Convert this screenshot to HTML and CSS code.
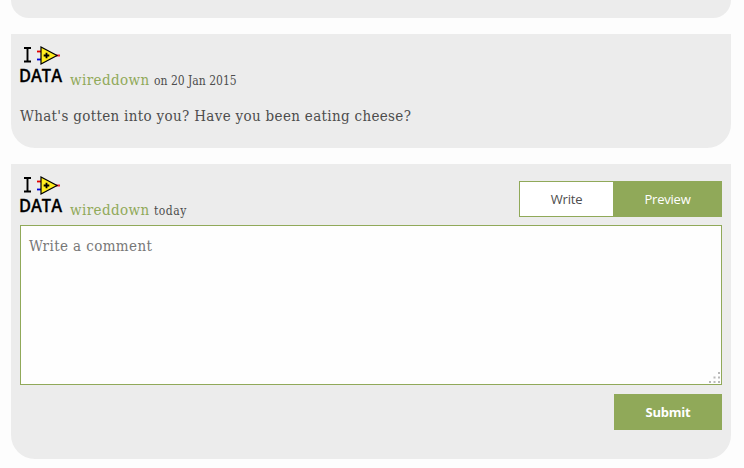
FILE: index.html
```html
<!DOCTYPE html>
<html lang="en">
<head>
<meta charset="utf-8">
<title>Comments</title>
<link rel="stylesheet" href="styles.css">
</head>
<body>
<svg width="0" height="0" class="defs" aria-hidden="true">
  <symbol id="amp" viewBox="0 0 42 41" overflow="visible">
    <path d="M4 4h7M7.500 4v14M4 17.500h7" fill="none" stroke="#000" stroke-width="1.900"/>
    <path d="M17 7.500h4" stroke="#e00000" stroke-width="1.800"/>
    <path d="M17 15.500h4" stroke="#0000d8" stroke-width="1.800"/>
    <path d="M36 11.500h4" stroke="#e8283a" stroke-width="2"/>
    <path d="M21 3v17l16-8.500z" fill="#ffee20" stroke="#000" stroke-width="1.200"/>
    <path d="M23.700 11.500h5.600M26.500 8.700v5.600" stroke="#000" stroke-width="1.800"/>
  </symbol>
</svg>
<main class="comments">
  <article class="card card-previous"></article>
  <article class="card card-comment">
    <header class="meta">
      <svg class="avatar" viewBox="0 0 42 41"><use href="#amp"/><text x="-1" y="38" textLength="43" lengthAdjust="spacingAndGlyphs" class="avatar-text">DATA</text></svg>
      <a class="author">wireddown</a>
      <span class="date">on 20 Jan 2015</span>
    </header>
    <p class="message">What's gotten into you? Have you been eating cheese?</p>
  </article>
  <form class="card card-form">
    <div class="form-head">
      <div class="meta">
        <svg class="avatar" viewBox="0 0 42 41"><use href="#amp"/><text x="-1" y="38" textLength="43" lengthAdjust="spacingAndGlyphs" class="avatar-text">DATA</text></svg>
        <a class="author">wireddown</a>
        <span class="date today">today</span>
      </div>
      <div class="tabs">
        <button type="button" class="tab tab-write">Write</button>
        <button type="button" class="tab tab-preview">Preview</button>
      </div>
    </div>
    <div class="editor">
      <textarea class="input" placeholder="Write a comment"></textarea>
      <svg class="grip" viewBox="0 0 11 11"><path d="M9 0h2v2h-2zM4.500 4.500h2v2h-2zM9 4.500h2v2h-2zM0 9h2v2h-2zM4.500 9h2v2h-2zM9 9h2v2h-2z" fill="#b9b9b9"/></svg>
    </div>
    <button type="button" class="submit">Submit</button>
  </form>
</main>
</body>
</html>
```
FILE: styles.css
```css
* { box-sizing: border-box; }
body {
  margin: 0;
  background: #fdfdfd;
  color: #4d4d4d;
  font-family: "DejaVu Serif Condensed", "DejaVu Serif", serif;
  font-stretch: condensed;
  overflow: hidden;
}
.defs { position: absolute; }
.comments {
  width: 720px;
  margin-left: 11px;
  display: flex;
  flex-direction: column;
  gap: 16px;
}
.card {
  background: #ececec;
  border-radius: 0 0 24px 24px;
  padding: 0 9px;
}
.card-previous { height: 18px; }
.card-comment { height: 114px; padding-top: 10px; }
.card-form { height: 295px; padding-top: 10px; }
.meta { display: flex; align-items: baseline; height: 42px; }
.avatar { width: 42px; height: 41px; flex: none; margin-right: 8px; overflow: visible; }
.avatar-text { font: 600 18px "Open Sans", sans-serif; fill: #000; stroke: #000; stroke-width: 0.3px; }
.author { color: #90a959; font-size: 15px; line-height: 20px; letter-spacing: 0.4px; width: 84px; white-space: nowrap; }
.date { font-size: 12px; letter-spacing: 0; white-space: nowrap; }
.today { letter-spacing: 0.5px; }
.message { margin: 18px 0 0; font-size: 15px; line-height: 24px; letter-spacing: 0.33px; white-space: nowrap; }
.form-head { display: flex; justify-content: space-between; height: 51px; }
.tabs { display: flex; width: 203px; height: 36px; margin-top: 7px; }
.tab, .submit {
  padding: 0;
  border: 1px solid #90a959;
  border-radius: 0;
  font: 13px "Open Sans", sans-serif;
  letter-spacing: -0.2px;
}
.tab-write { width: 94px; border-right: 0; background: #fff; color: #4d4d4d; }
.tab-preview { width: 109px; background: #90a959; color: #fff; }
.editor { position: relative; width: 702px; height: 160px; }
.input {
  display: block;
  width: 100%;
  height: 100%;
  margin: 0;
  padding: 8px;
  border: 1px solid #90a959;
  background: #fefefe;
  resize: none;
  outline: 0;
  font-family: inherit;
  font-stretch: condensed;
  font-size: 15px;
  line-height: 24px;
  letter-spacing: 0.4px;
}
.input::placeholder { color: #777; opacity: 1; }
.grip { position: absolute; right: 2px; bottom: 2px; width: 11px; height: 11px; }
.submit {
  display: block;
  width: 108px;
  height: 36px;
  margin: 9px 0 0 594px;
  background: #90a959;
  color: #fff;
  font-weight: 700;
}
```
